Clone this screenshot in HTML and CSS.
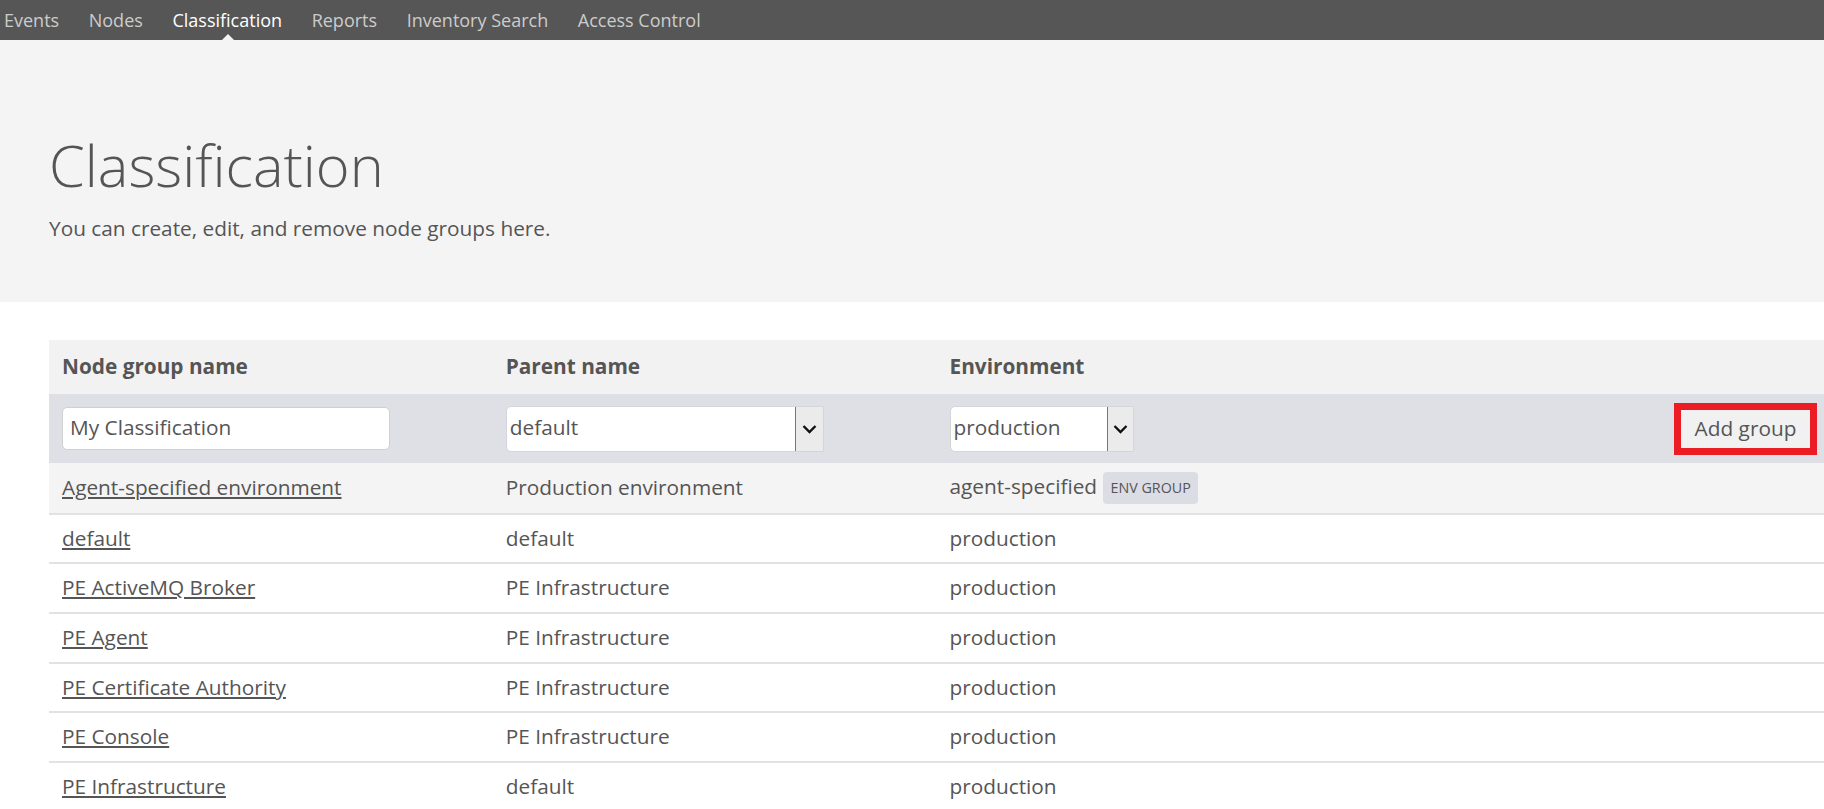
FILE: index.html
```html
<!DOCTYPE html>
<html lang="en">
<head>
<meta charset="utf-8">
<title>Classification</title>
<link rel="stylesheet" href="styles.css">
</head>
<body>
<nav class="topnav">
  <a class="nav-item" href="#">Events</a>
  <a class="nav-item" href="#">Nodes</a>
  <a class="nav-item active" href="#">Classification</a>
  <a class="nav-item" href="#">Reports</a>
  <a class="nav-item" href="#">Inventory Search</a>
  <a class="nav-item" href="#">Access Control</a>
</nav>
<header class="hero">
  <h1 class="hero-title">Classification</h1>
  <p class="hero-sub">You can create, edit, and remove node groups here.</p>
</header>
<main class="content">
  <table class="groups">
    <thead>
      <tr class="head-row">
        <th>Node group name</th>
        <th>Parent name</th>
        <th>Environment</th>
        <th></th>
      </tr>
    </thead>
    <tbody>
      <tr class="add-row">
        <td><input class="text-input" type="text" value="My Classification"></td>
        <td>
          <div class="select select-parent"><span class="select-value">default</span><span class="select-arrow"><svg width="15" height="10" viewBox="0 0 15 10"><path d="M1.5 2 L7.5 8 L13.5 2" fill="none" stroke="#111" stroke-width="2.4"/></svg></span></div>
        </td>
        <td>
          <div class="select select-env"><span class="select-value">production</span><span class="select-arrow"><svg width="15" height="10" viewBox="0 0 15 10"><path d="M1.5 2 L7.5 8 L13.5 2" fill="none" stroke="#111" stroke-width="2.4"/></svg></span></div>
        </td>
        <td class="action-cell"><span class="highlight"><button class="btn" type="button">Add group</button></span></td>
      </tr>
      <tr class="row env-row">
        <td><a href="#">Agent-specified environment</a></td>
        <td>Production environment</td>
        <td>agent-specified <span class="badge">ENV GROUP</span></td>
        <td></td>
      </tr>
      <tr class="row">
        <td><a href="#">default</a></td>
        <td>default</td>
        <td>production</td>
        <td></td>
      </tr>
      <tr class="row">
        <td><a href="#">PE ActiveMQ Broker</a></td>
        <td>PE Infrastructure</td>
        <td>production</td>
        <td></td>
      </tr>
      <tr class="row">
        <td><a href="#">PE Agent</a></td>
        <td>PE Infrastructure</td>
        <td>production</td>
        <td></td>
      </tr>
      <tr class="row">
        <td><a href="#">PE Certificate Authority</a></td>
        <td>PE Infrastructure</td>
        <td>production</td>
        <td></td>
      </tr>
      <tr class="row">
        <td><a href="#">PE Console</a></td>
        <td>PE Infrastructure</td>
        <td>production</td>
        <td></td>
      </tr>
      <tr class="row">
        <td><a href="#">PE Infrastructure</a></td>
        <td>default</td>
        <td>production</td>
        <td></td>
      </tr>
    </tbody>
  </table>
</main>
</body>
</html>
```

FILE: styles.css
```css
* { box-sizing: border-box; }

html, body {
  margin: 0;
  padding: 0;
  background: #ffffff;
  overflow: hidden;
}

body {
  font-family: "Open Sans", "Liberation Sans", sans-serif;
  font-size: 20.8px;
  color: #555555;
  line-height: 1.5;
}

/* top navigation */
.topnav {
  display: flex;
  gap: 29.6px;
  height: 40px;
  padding-left: 4px;
  background: #565656;
}

.nav-item {
  position: relative;
  font-size: 18px;
  line-height: 40px;
  color: #cccccc;
  text-decoration: none;
}

.nav-item.active {
  color: #ffffff;
}

.nav-item.active::after {
  content: "";
  position: absolute;
  left: 50%;
  bottom: 0;
  margin-left: -5px;
  border-left: 6px solid transparent;
  border-right: 6px solid transparent;
  border-bottom: 6px solid #f4f4f4;
}

/* page header */
.hero {
  background: #f4f4f4;
  padding: 93px 49px 58px;
}

.hero-title {
  margin: 0;
  font-size: 57.7px;
  font-weight: 300;
  line-height: 64.35px;
  color: #555555;
}

.hero-sub {
  margin: 15.5px 0 0;
  font-size: 20.8px;
  line-height: 31.2px;
}

/* table */
.content {
  padding: 38px 0 0 49px;
}

.groups {
  width: 1775px;
  table-layout: fixed;
  border-collapse: collapse;
}

.groups th,
.groups td {
  text-align: left;
  padding: 0 13px;
  vertical-align: middle;
}

.head-row {
  background: #f2f2f2;
  height: 54px;
}

.head-row th {
  font-weight: 700;
  color: #555555;
}

.add-row {
  background: #dfdfe6;
  height: 69px;
}

.text-input {
  display: block;
  width: 328px;
  height: 43px;
  padding: 0 7px 3px;
  border: 1px solid #cfcfd4;
  border-radius: 5px;
  background: #ffffff;
  font-family: "Open Sans", "Liberation Sans", sans-serif;
  font-size: 20.8px;
  color: #555555;
}

.select {
  display: flex;
  align-items: stretch;
  height: 46px;
  background: #ffffff;
  border: 1px solid #d4d4da;
  border-radius: 5px 0 0 5px;
  overflow: hidden;
}

.select-parent { width: 318px; }
.select-env { width: 184px; }

.select-value {
  flex: 1;
  padding-left: 3px;
  line-height: 41px;
  color: #555555;
}

.select-arrow {
  display: flex;
  align-items: center;
  justify-content: center;
  width: 29px;
  background: #ebebeb;
  border: 1px solid #767676;
  margin: -1px -1px -1px 0;
}

.select-env .select-arrow { width: 27px; }

.groups td.action-cell {
  text-align: right;
  padding-right: 7px;
}

.highlight {
  display: inline-block;
  border: 7.5px solid #ec1c24;
  line-height: 0;
}

.btn {
  width: 129px;
  height: 38px;
  padding: 0 0 2px;
  border: 0;
  background: #f1f1f1;
  font-family: "Open Sans", "Liberation Sans", sans-serif;
  font-size: 20.8px;
  line-height: 36px;
  color: #555555;
}

.groups .row td {
  padding-top: 8px;
  padding-bottom: 8.5px;
  border-bottom: 2px solid #e2e2e2;
}

.env-row {
  background: #f4f4f4;
}

.row a {
  color: #555555;
  text-decoration: underline;
}

.badge {
  display: inline-block;
  height: 32px;
  padding: 0 7px;
  margin-left: 1px;
  border-radius: 4px;
  background: #dcdce5;
  font-size: 14.3px;
  line-height: 32px;
  vertical-align: 1px;
}
```
